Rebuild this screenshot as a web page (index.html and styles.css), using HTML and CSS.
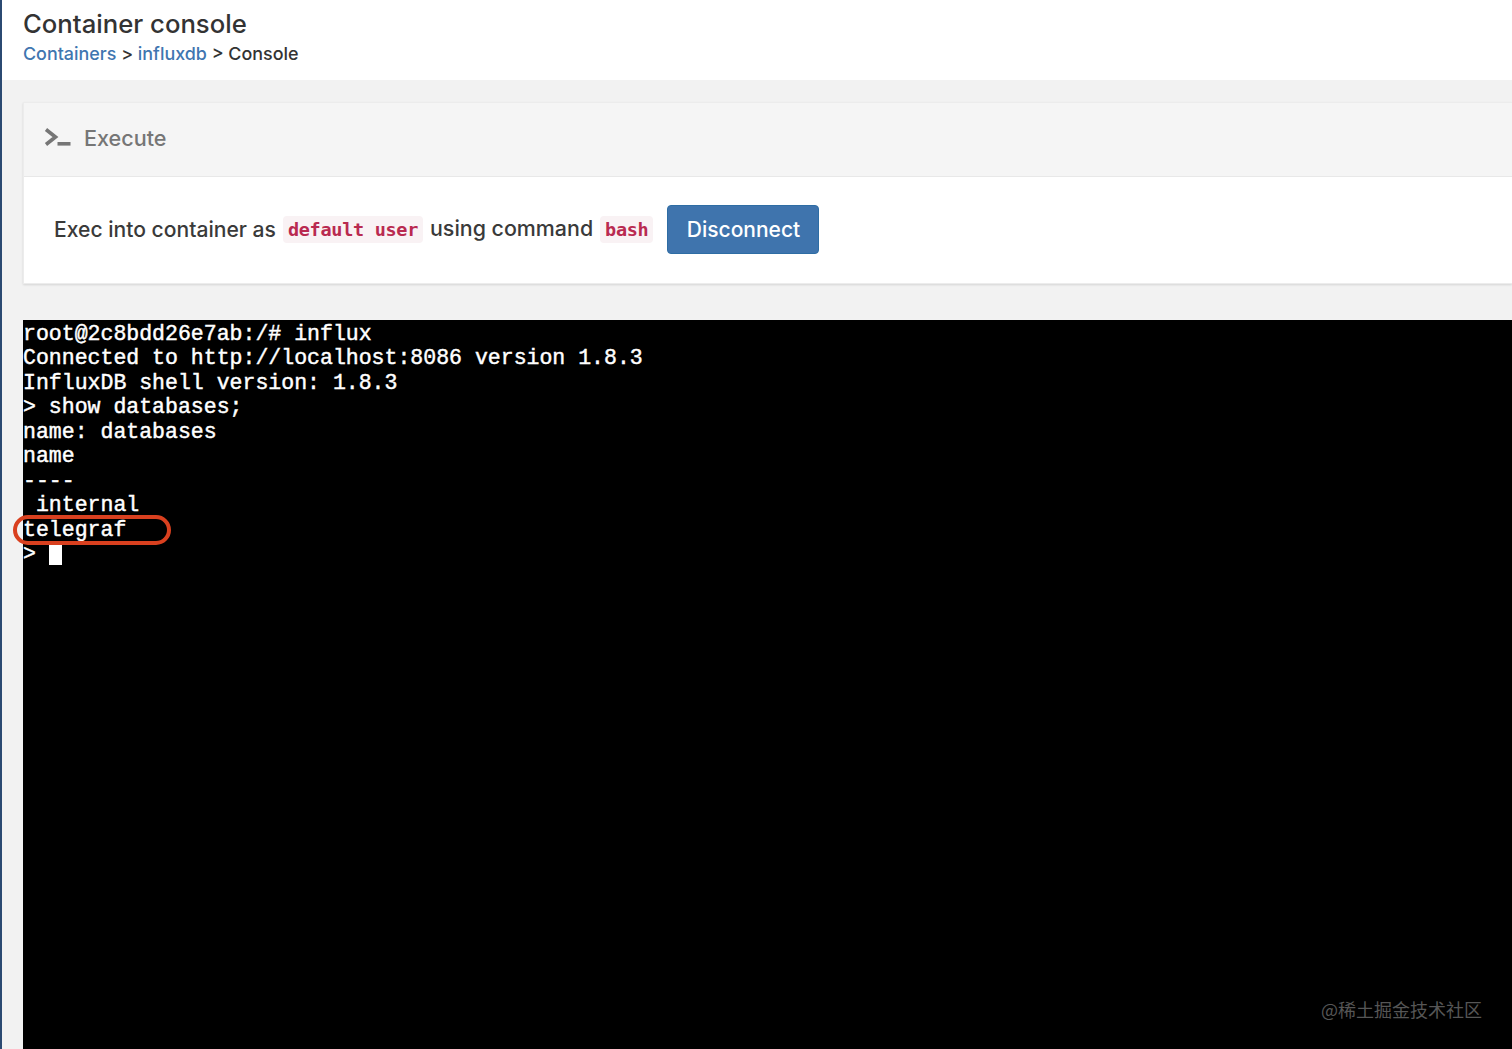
FILE: index.html
```html
<!DOCTYPE html>
<html lang="en">
<head>
<meta charset="utf-8">
<title>Container console</title>
<link rel="stylesheet" href="styles.css">
</head>
<body>
<div class="app">
  <div class="sidebar-edge"></div>
  <main class="main">
    <header class="page-header">
      <h1 class="title">Container console</h1>
      <nav class="crumbs"><a class="crumb-link">Containers</a> &gt; <a class="crumb-link">influxdb</a> &gt; Console</nav>
    </header>
    <section class="content">
      <div class="panel">
        <div class="panel-head">
          <svg class="prompt-icon" width="28" height="20" viewBox="0 0 28 20" aria-hidden="true"><path d="M2 1.500 L11.500 9 L2 16.500" fill="none" stroke="#767676" stroke-width="3.600"/><rect x="13.500" y="14" width="13" height="3.600" fill="#767676"/></svg>
          <span class="panel-title">Execute</span>
        </div>
        <div class="panel-body">
          <span class="exec-label">Exec into container as</span>
          <code class="chip">default user</code>
          <span class="cmd-label">using command</span>
          <code class="chip">bash</code>
          <button class="btn">Disconnect</button>
        </div>
      </div>
      <div class="terminal">
        <pre class="term-text">root@2c8bdd26e7ab:/# influx
Connected to http://localhost:8086 version 1.8.3
InfluxDB shell version: 1.8.3
&gt; show databases;
name: databases
name
----
 internal
telegraf
&gt; <span class="cursor"> </span></pre>
        <div class="marker"></div>
        <div class="watermark">@稀土掘金技术社区</div>
      </div>
    </section>
  </main>
</div>
</body>
</html>
```
FILE: styles.css
```css
* { box-sizing: border-box; }
html, body { margin: 0; height: 100%; }
body { overflow: hidden; background: #f2f2f2; font-family: Inter, "Open Sans", sans-serif; }
.app { display: flex; height: 1049px; }
.sidebar-edge { flex: 0 0 2px; background: #2b4a72; }
.main { flex: 1; min-width: 0; display: flex; flex-direction: column; }
.page-header { height: 80px; background: #fff; padding: 8px 0 0 21px; }
.title { margin: 0; font-size: 25.700px; line-height: 32px; font-weight: 500; color: #333; }
.crumbs { margin-top: 2px; font-size: 17.900px; line-height: 24px; font-weight: 500; color: #333; white-space: nowrap; }
.crumb-link { color: #3f76b0; }
.content { flex: 1; min-height: 0; padding: 22px 0 0 21px; display: flex; flex-direction: column; }
.panel { height: 182px; background: #fff; box-shadow: 0 1px 2px rgba(0,0,0,.12); border: 1px solid #ececec; border-right: 0; }
.panel-head { height: 74px; background: #f5f5f5; border-bottom: 1px solid #e8e8e8; display: flex; align-items: center; padding: 0 0 4px 20px; gap: 12px; }
.panel-title { font-size: 21.600px; font-weight: 500; color: #767676; }
.panel-body { display: flex; align-items: center; height: 106px; padding: 0 0 1px 30px; font-size: 21.400px; font-weight: 500; color: #3a3a3a; }
.exec-label { font-size: 21.100px; white-space: nowrap; }
.cmd-label { white-space: nowrap; padding-bottom: 3px; }
.chip { margin: 0 7px; padding: 2px 5px; background: #f9f2f4; color: #b92a50; border-radius: 4px; font: 700 18.500px/23px "DejaVu Sans Mono", monospace; letter-spacing: -.3px; white-space: nowrap; }
.btn { margin-left: 7px; width: 152px; height: 49px; background: #3f74ad; color: #fff; border: 1px solid #2e6da4; border-radius: 4px; font: 500 21px Inter, sans-serif; }
.terminal { position: relative; margin-top: 36px; flex: 1; min-height: 0; background: #000; color: #fff; }
.term-text { margin: 0; padding-top: 2px; font: 400 21.530px/24.440px "Liberation Mono", monospace; -webkit-text-stroke: .45px #fff; }
.cursor { display: inline-block; width: 13px; height: 20px; background: #fff; vertical-align: -3px; -webkit-text-stroke: 0; }
.marker { position: absolute; left: -10px; top: 195px; width: 158px; height: 30px; border: 4px solid #d9401f; border-radius: 15px; }
.watermark { position: absolute; right: 30px; bottom: 28px; font: 18px/24px "Noto Sans CJK SC", sans-serif; color: #565656; }
```
